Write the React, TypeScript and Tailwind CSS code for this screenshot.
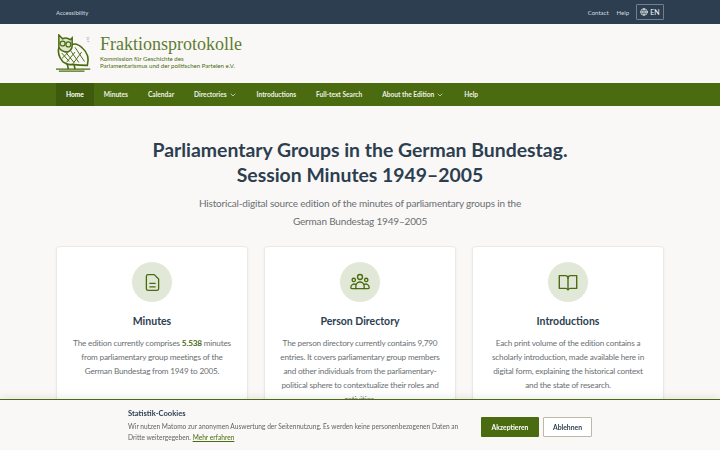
import { ChevronDown, Globe } from "lucide-react";

const navItems = [
  { label: "Home", active: true },
  { label: "Minutes" },
  { label: "Calendar" },
  { label: "Directories", menu: true },
  { label: "Introductions" },
  { label: "Full-text Search" },
  { label: "About the Edition", menu: true },
  { label: "Help" },
];

function Owl() {
  return (
    <svg viewBox="0 0 40 40" className="h-[38px] w-[38px] shrink-0" fill="none" stroke="#4a6b10">
      <path d="M3 1 L7 5 Q11 3 15 6 L17 4 L17 12 Q17 17 12 19 Q6 19 3 14 Z" strokeWidth="1.6" fill="#dfe6cf" />
      <circle cx="7" cy="10" r="2.6" strokeWidth="1.3" />
      <circle cx="13" cy="11" r="2.6" strokeWidth="1.3" />
      <path d="M3 14 Q1 22 7 29 Q12 33 17 32 Q25 33 33 33 Q36 22 28 15 Q22 9 17 11" strokeWidth="1.7" />
      <path d="M6 20 L14 29 M10 19 L19 30 M15 17 L24 30 M20 14 L30 29 M6 26 L13 19 M11 30 L20 19 M18 31 L27 19" strokeWidth="1" />
      <path d="M12 32 L13 37 M19 32 L20 37" strokeWidth="1.7" />
      <path d="M0 37 H36 M3 39 H30" strokeWidth="1.3" />
      <path d="M32 4h3M32.500 6h2M33 8h2" stroke="#b9b9b2" strokeWidth="1" />
    </svg>
  );
}

function MinutesIcon() {
  return (
    <svg viewBox="0 0 24 24" className="h-[21px] w-[21px]" fill="none" stroke="currentColor" strokeWidth="1.5" strokeLinecap="round" strokeLinejoin="round">
      <path d="M7 3h7l5 5v11a2 2 0 0 1-2 2H7a2 2 0 0 1-2-2V5a2 2 0 0 1 2-2Z" />
      <path d="M9 13h6M9 17h6" />
    </svg>
  );
}

function PeopleIcon() {
  return (
    <svg viewBox="0 0 24 24" className="h-[20px] w-[20px]" fill="none" stroke="currentColor" strokeWidth="1.6" strokeLinecap="round" strokeLinejoin="round">
      <circle cx="12" cy="6" r="3" />
      <circle cx="4.5" cy="9.5" r="2" />
      <circle cx="19.5" cy="9.5" r="2" />
      <path d="M7 20v-3a5 5 0 0 1 10 0v3Z" />
      <path d="M7 20H2.500a1.500 1.500 0 0 1-1.500-1.500 4 4 0 0 1 6-3.500M17 20h4.500a1.500 1.500 0 0 0 1.500-1.500 4 4 0 0 0-6-3.500" />
    </svg>
  );
}

function BookIcon() {
  return (
    <svg viewBox="0 0 24 24" className="h-[22px] w-[22px]" fill="none" stroke="currentColor" strokeWidth="1.5" strokeLinecap="round" strokeLinejoin="round">
      <path d="M2.500 5H9a3 3 0 0 1 3 3 3 3 0 0 1 3-3h6.500v14H15a3 3 0 0 0-3 1.500A3 3 0 0 0 9 19H2.500Z" />
      <path d="M12 8v12" />
    </svg>
  );
}

type CardProps = {
  icon: React.ReactNode;
  title: string;
  children: React.ReactNode;
};

function Card({ icon, title, children }: CardProps) {
  return (
    <div className="h-[230px] rounded border border-[#ece9e4] bg-white px-[14px] pt-[15px] text-center shadow-[0_1px_3px_rgba(0,0,0,0.05)]">
      <div className="mx-auto flex h-10 w-10 items-center justify-center rounded-full bg-[#e2e8d8] text-[#4a6b10]">
        {icon}
      </div>
      <h3 className="mt-[11px] text-[10.5px] leading-[16px] font-bold text-[#2c3e50]">{title}</h3>
      <p className="mt-[7px] text-[8.2px] leading-[14px] tracking-[-0.2px] text-[#6b6f73]">{children}</p>
    </div>
  );
}

export default function App() {
  return (
    <div className="h-screen overflow-hidden bg-[#f9f8f6] font-['Lato','Noto_Sans',sans-serif]">
      {/* Top bar */}
      <div className="h-6 bg-[#2c3e50]">
        <div className="mx-auto flex h-6 w-[608px] items-center justify-between text-[6px] text-[#d5dbe0]">
          <span>Accessibility</span>
          <div className="flex items-center">
            <span>Contact</span>
            <span className="ml-[8px]">Help</span>
            <span className="ml-[7px] flex h-[16px] w-[28px] items-center justify-center gap-[2px] rounded-[1px] border border-[#71808f] text-[7px] text-white">
              <Globe size={8} />
              EN
            </span>
          </div>
        </div>
      </div>

      {/* Logo */}
      <div className="h-[59px]">
        <div className="mx-auto flex w-[608px] items-start pt-[10px]">
          <Owl />
          <div className="ml-[6px]">
            <div className="font-['Liberation_Serif',serif] text-[18px] leading-[20px] whitespace-nowrap text-[#5f7d33]">
              Fraktionsprotokolle
            </div>
            <div className="mt-[1px] text-[6.1px] leading-[7px] whitespace-nowrap text-[#4a6b10]">
              Kommission für Geschichte des
              <br />
              Parlamentarismus und der politischen Parteien e.V.
            </div>
          </div>
        </div>
      </div>

      {/* Main nav */}
      <div className="h-[23px] bg-[#4a6b10]">
        <div className="mx-auto flex h-[23px] w-[608px] text-[6.6px] font-bold text-[#eef1e6]">
          {navItems.map((item) => (
            <div
              key={item.label}
              className={`flex items-center px-[10px] ${item.active ? "bg-[#3e5a0c] text-white" : ""}`}
            >
              {item.label}
              {item.menu && <ChevronDown size={8} className="ml-[2px]" />}
            </div>
          ))}
        </div>
      </div>

      {/* Hero */}
      <div className="pt-[31px] text-center">
        <h1 className="text-[19.4px] leading-[25px] font-bold text-[#2c3e50]">
          Parliamentary Groups in the German Bundestag.
          <br />
          Session Minutes 1949–2005
        </h1>
        <p className="mt-[7px] text-[10px] leading-[18px] tracking-[-0.18px] text-[#6b6f73]">
          Historical-digital source edition of the minutes of parliamentary groups in the
          <br />
          German Bundestag 1949–2005
        </p>
      </div>

      {/* Cards */}
      <div className="mx-auto mt-[16px] grid w-[608px] grid-cols-3 gap-4">
        <Card icon={<MinutesIcon />} title="Minutes">
          The edition currently comprises <strong className="font-bold text-[#4a6b10]">5.538</strong> minutes
          from parliamentary group meetings of the German Bundestag from 1949 to 2005.
        </Card>
        <Card icon={<PeopleIcon />} title="Person Directory">
          The person directory currently contains 9,790 entries. It covers parliamentary group members
          and other individuals from the parliamentary-political sphere to contextualize their roles and
          activities.
        </Card>
        <Card icon={<BookIcon />} title="Introductions">
          Each print volume of the edition contains a scholarly introduction, made available here in
          digital form, explaining the historical context and the state of research.
        </Card>
      </div>

      {/* Cookie banner */}
      <div className="fixed inset-x-0 bottom-0 h-[51px] border-t border-[#4a6b10] bg-[#f9f8f6] shadow-[0_-2px_8px_rgba(0,0,0,0.08)]">
        <div className="mx-auto flex w-[464px] items-center justify-between pt-[8px]">
          <div className="w-[340px]">
            <div className="text-[7.6px] leading-[10px] font-bold text-[#2c3e50]">Statistik-Cookies</div>
            <p className="mt-[3px] text-[6.6px] leading-[11px] text-[#5f6368]">
              Wir nutzen Matomo zur anonymen Auswertung der Seitennutzung. Es werden keine personenbezogenen Daten an
              Dritte weitergegeben.{" "}
              <span className="text-[#4a6b10] underline">Mehr erfahren</span>
            </p>
          </div>
          <div className="flex items-center gap-[4px] pt-[3px]">
            <button className="h-[20px] w-[58px] rounded-[1px] bg-[#4a6b10] text-[6.8px] font-bold text-white">
              Akzeptieren
            </button>
            <button className="h-[20px] w-[49px] rounded-[1px] border border-[#bdb9a8] bg-white text-[6.8px] font-bold text-[#2c3e50]">
              Ablehnen
            </button>
          </div>
        </div>
      </div>
    </div>
  );
}
